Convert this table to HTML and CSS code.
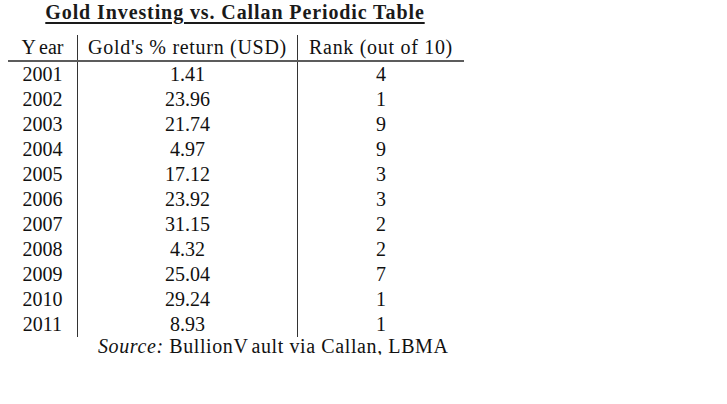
FILE: index.html
```html
<!DOCTYPE html>
<html>
<head>
<meta charset="utf-8">
<link rel="stylesheet" href="styles.css">
</head>
<body>
<div class="sheet">
  <h1 class="title">Gold Investing vs. Callan Periodic Table</h1>
  <table class="data">
    <thead>
      <tr><th class="c1"><span class="kern">Y</span>ear</th><th class="c2">Gold's % return (USD)</th><th class="c3">Rank (out of 10)</th></tr>
    </thead>
    <tbody>
      <tr><td class="c1">2001</td><td class="c2">1.41</td><td class="c3">4</td></tr>
      <tr><td class="c1">2002</td><td class="c2">23.96</td><td class="c3">1</td></tr>
      <tr><td class="c1">2003</td><td class="c2">21.74</td><td class="c3">9</td></tr>
      <tr><td class="c1">2004</td><td class="c2">4.97</td><td class="c3">9</td></tr>
      <tr><td class="c1">2005</td><td class="c2">17.12</td><td class="c3">3</td></tr>
      <tr><td class="c1">2006</td><td class="c2">23.92</td><td class="c3">3</td></tr>
      <tr><td class="c1">2007</td><td class="c2">31.15</td><td class="c3">2</td></tr>
      <tr><td class="c1">2008</td><td class="c2">4.32</td><td class="c3">2</td></tr>
      <tr><td class="c1">2009</td><td class="c2">25.04</td><td class="c3">7</td></tr>
      <tr><td class="c1">2010</td><td class="c2">29.24</td><td class="c3">1</td></tr>
      <tr><td class="c1">2011</td><td class="c2">8.93</td><td class="c3">1</td></tr>
    </tbody>
  </table>
  <p class="source"><em>Source:</em> Bullion<span class="kern">V</span>ault via Callan, LBMA</p>
</div>
</body>
</html>
```
FILE: styles.css
```css
html, body {
  margin: 0;
  padding: 0;
  background: #ffffff;
}
.sheet {
  padding: 0 0 0 8px;
  font-family: "Liberation Serif", "Times New Roman", serif;
  color: #111111;
  width: 454px;
}
.title {
  margin: 0;
  font-size: 20px;
  font-weight: bold;
  line-height: 24px;
  text-align: center;
  letter-spacing: 0.9px;
  text-decoration: underline;
  text-decoration-thickness: 2px;
  text-underline-offset: 3px;
  color: #1a1a1a;
}
.data {
  margin-top: 11px;
  border-collapse: collapse;
  border-spacing: 0;
  width: 454px;
  table-layout: fixed;
  font-size: 20px;
}
.data th, .data td {
  padding: 0;
  font-weight: normal;
  line-height: 25px;
  text-align: center;
  white-space: nowrap;
}
.data th {
  letter-spacing: 0.7px;
  border-bottom: 2px solid #5c5c5c;
}
.data .c1 { width: 69px; border-right: 1.5px solid #333333; }
.data .c2 { width: 219px; border-right: 1.5px solid #333333; }
.data .c3 { width: 166px; }
.data th.c1 { letter-spacing: 0; }
.kern { margin-right: 3px; }
.source {
  margin: 0;
  padding-left: 90px;
  font-size: 20px;
  line-height: 18px;
  letter-spacing: 0.6px;
  white-space: nowrap;
}
```
